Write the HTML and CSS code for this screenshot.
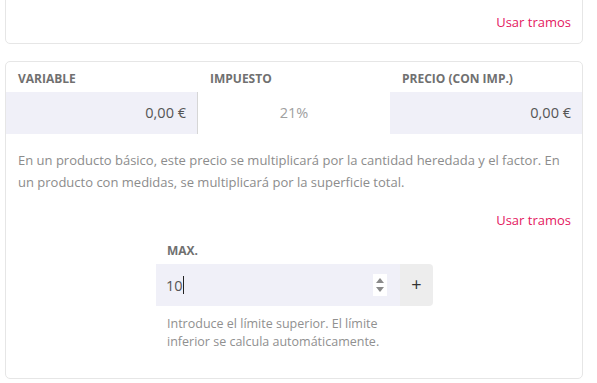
FILE: index.html
```
<!DOCTYPE html>
<html>
<head>
<meta charset="utf-8">
<title>Precio</title>
<link rel="stylesheet" href="styles.css">
</head>
<body>

<div class="card card-top">
	<div class="link-row"><a class="tramos" href="#">Usar tramos</a></div>
</div>

<div class="card">
	<div class="cols">
		<div class="col">
			<div class="label">Variable</div>
			<div class="field fill right">0,00 €</div>
		</div>
		<div class="col">
			<div class="label">Impuesto</div>
			<div class="field center muted">21%</div>
		</div>
		<div class="col">
			<div class="label">Precio (con imp.)</div>
			<div class="field fill right">0,00 €</div>
		</div>
	</div>

	<p class="help">En un producto básico, este precio se multiplicará por la cantidad heredada y el factor. En un producto con medidas, se multiplicará por la superficie total.</p>

	<div class="link-row link-gap"><a class="tramos" href="#">Usar tramos</a></div>

	<div class="tramo">
		<div class="label">Max.</div>
		<div class="group">
			<div class="num">
				<span class="val">10</span><span class="caret"></span>
				<span class="spin">
					<svg width="14" height="22" viewBox="0 0 14 22">
						<rect width="14" height="22" fill="#fff"/>
						<path d="M3 9 L7 4 L11 9 Z" fill="#8a8a8a"/>
						<path d="M3 13 L7 18 L11 13 Z" fill="#8a8a8a"/>
					</svg>
				</span>
			</div>
			<div class="plus">+</div>
		</div>
		<p class="hint">Introduce el límite superior. El límite inferior se calcula automáticamente.</p>
	</div>
</div>

</body>
</html>
```

FILE: styles.css
```
* {
box-sizing: border-box;
}
body {
margin: 0;
padding: 0 14px 0 5px;
font-family: "Open Sans", sans-serif;
background: #fff;
color: #555;
}
.card {
border: 1px solid #e6e6e6;
border-radius: 5px;
margin-bottom: 17px;
}
.card-top {
margin-top: -20px;
height: 64px;
padding-top: 31px;
}
.link-row {
text-align: right;
padding-right: 11px;
line-height: 18px;
}
.link-gap {
margin-top: 17px;
}
.tramos {
color: #e4185f;
text-decoration: none;
font-size: 13px;
}
.cols {
display: grid;
grid-template-columns: 192px 192px 1fr;
padding-top: 8px;
}
.label {
font-size: 12px;
font-weight: bold;
text-transform: uppercase;
color: #707070;
padding: 0 12px;
height: 22px;
line-height: 18px;
}
.field {
height: 42px;
line-height: 42px;
font-size: 14.5px;
padding: 0 11px;
}
.fill {
background: #f0f0f8;
}
.col:first-child .field {
border-right: 1px solid #d6d6d6;
}
.right {
text-align: right;
}
.center {
text-align: center;
}
.muted {
color: #a0a0a0;
}
.help {
margin: 15px 12px 0;
font-size: 13px;
line-height: 22px;
color: #8c8c8c;
}
.tramo {
margin: 13px 0 0 150px;
width: 277px;
padding-bottom: 27px;
}
.tramo .label {
padding: 0 11px;
}
.group {
display: flex;
height: 42px;
}
.num {
flex: 1;
display: flex;
align-items: center;
background: #f0f0f8;
padding: 0 13px 0 10px;
font-size: 14.5px;
color: #555;
}
.caret {
width: 1px;
height: 18px;
background: #222;
}
.spin {
margin-left: auto;
display: flex;
}
.plus {
width: 33px;
background: #ededed;
border-radius: 0 4px 4px 0;
text-align: center;
line-height: 40px;
font-size: 18px;
color: #333;
}
.hint {
margin: 9px 11px 0;
font-size: 12.5px;
line-height: 18px;
color: #909090;
}
```
